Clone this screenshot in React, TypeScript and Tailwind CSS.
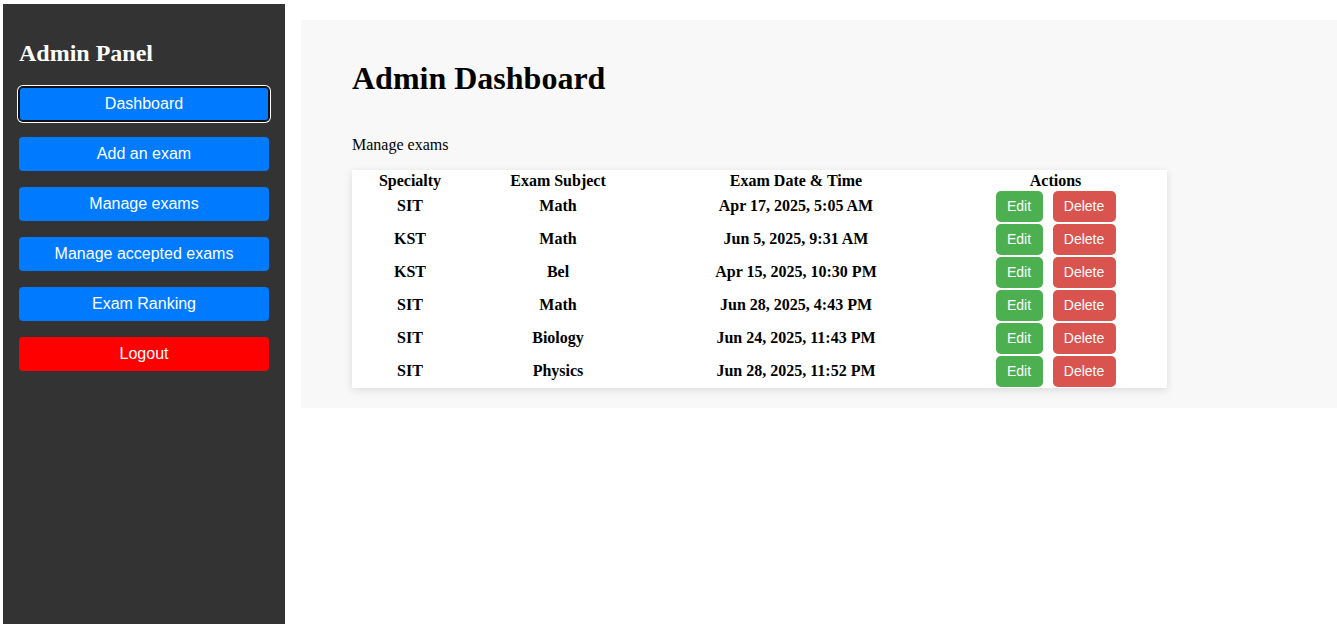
import * as React from "react";

const exams = [
  { specialty: "SIT", subject: "Math", date: "Apr 17, 2025, 5:05 AM" },
  { specialty: "KST", subject: "Math", date: "Jun 5, 2025, 9:31 AM" },
  { specialty: "KST", subject: "Bel", date: "Apr 15, 2025, 10:30 PM" },
  { specialty: "SIT", subject: "Math", date: "Jun 28, 2025, 4:43 PM" },
  { specialty: "SIT", subject: "Biology", date: "Jun 24, 2025, 11:43 PM" },
  { specialty: "SIT", subject: "Physics", date: "Jun 28, 2025, 11:52 PM" },
];

const navItems = [
  "Dashboard",
  "Add an exam",
  "Manage exams",
  "Manage accepted exams",
  "Exam Ranking",
];

function Sidebar() {
  return (
    <aside className="flex h-[620px] w-[282px] shrink-0 flex-col bg-[#333333] px-[16px] pt-[35px]">
      <h2 className="h-[28px] text-[24px] font-bold leading-[28px] text-white">
        Admin Panel
      </h2>
      <nav className="mt-[20px] flex flex-col gap-[16px]">
        {navItems.map((item, i) => (
          <button
            key={item}
            type="button"
            className={
              i === 0
                ? "h-[34px] w-[250px] rounded-[4px] bg-[#007bff] font-['Liberation_Sans',Arial,sans-serif] text-[16px] text-white shadow-[inset_0_0_0_1px_#101010,0_0_0_1px_#101010,0_0_0_2px_#ffffff]"
                : "h-[34px] w-[250px] rounded-[4px] bg-[#007bff] font-['Liberation_Sans',Arial,sans-serif] text-[16px] text-white"
            }
          >
            {item}
          </button>
        ))}
        <button
          type="button"
          className="h-[34px] w-[250px] rounded-[4px] bg-[#ff0000] font-['Liberation_Sans',Arial,sans-serif] text-[16px] text-white"
        >
          Logout
        </button>
      </nav>
    </aside>
  );
}

function ExamTable() {
  return (
    <table className="mt-[16px] w-[815px] table-fixed border-collapse bg-white shadow-[0_2px_8px_rgba(0,0,0,0.12)]">
      <colgroup>
        <col className="w-[116px]" />
        <col className="w-[180px]" />
        <col className="w-[296px]" />
        <col className="w-[223px]" />
      </colgroup>
      <thead>
        <tr className="h-[20px]">
          <th className="p-0 pt-[2px] text-center text-[16px] font-bold leading-[18px]">Specialty</th>
          <th className="p-0 pt-[2px] text-center text-[16px] font-bold leading-[18px]">Exam Subject</th>
          <th className="p-0 pt-[2px] text-center text-[16px] font-bold leading-[18px]">Exam Date &amp; Time</th>
          <th className="p-0 pt-[2px] text-center text-[16px] font-bold leading-[18px]">Actions</th>
        </tr>
      </thead>
      <tbody>
        {exams.map((exam, i) => (
          <tr key={i} className="h-[33px]">
            <td className="p-0 pb-[2px] text-center text-[16px] font-bold">{exam.specialty}</td>
            <td className="p-0 pb-[2px] text-center text-[16px] font-bold">{exam.subject}</td>
            <td className="p-0 pb-[2px] text-center text-[16px] font-bold">{exam.date}</td>
            <td className="p-0">
              <div className="flex items-center justify-center gap-[10px]">
                <button
                  type="button"
                  className="h-[31px] w-[47px] rounded-[5px] bg-[#4caf50] font-['Liberation_Sans',Arial,sans-serif] text-[14px] text-white"
                >
                  Edit
                </button>
                <button
                  type="button"
                  className="h-[31px] w-[63px] rounded-[5px] bg-[#d9534f] font-['Liberation_Sans',Arial,sans-serif] text-[14px] text-white"
                >
                  Delete
                </button>
              </div>
            </td>
          </tr>
        ))}
      </tbody>
    </table>
  );
}

export default function App() {
  return (
    <div className="flex h-[624px] overflow-hidden bg-white pl-[3px] pt-[4px] font-['Liberation_Serif','Times_New_Roman',serif] text-black">
      <Sidebar />
      <main className="ml-[16px] mt-[16px] h-fit flex-1 bg-[#f8f8f8] pb-[20px] pl-[51px] pt-[40px]">
        <h1 className="h-[37px] text-[32px] font-bold leading-[37px]">Admin Dashboard</h1>
        <p className="mt-[39px] h-[18px] text-[16px] leading-[18px]">Manage exams</p>
        <ExamTable />
      </main>
    </div>
  );
}
